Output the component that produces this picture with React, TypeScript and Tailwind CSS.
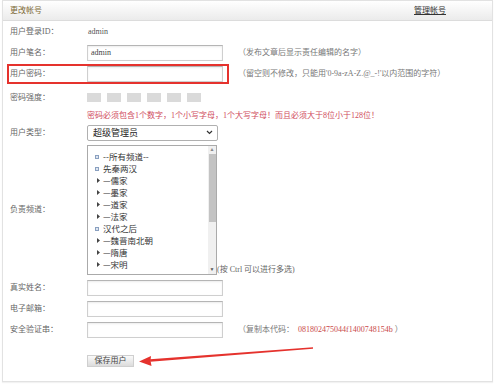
const serif = "font-['Liberation_Serif','Noto_Sans_CJK_SC',serif]";

function Label({ children }: { children: React.ReactNode }) {
  return <div className="w-[84px] shrink-0 pl-[7px] text-[8px] text-[#666]">{children}</div>;
}

function TextInput({ value = "" }: { value?: string }) {
  return (
    <div className="w-[136px] h-[16px] shrink-0 border border-[#cfcfcf] border-t-[#b5b5b5] bg-white shadow-[inset_0_1px_2px_rgba(0,0,0,0.08)] pl-[3px] flex items-center text-[8px] text-[#444]">
      {value}
    </div>
  );
}

const channels: { name: string; group?: boolean }[] = [
  { name: "--所有频道--", group: true },
  { name: "先秦两汉", group: true },
  { name: "—儒家" },
  { name: "—墨家" },
  { name: "—道家" },
  { name: "—法家" },
  { name: "汉代之后", group: true },
  { name: "—魏晋南北朝" },
  { name: "—隋唐" },
  { name: "—宋明" },
];

export default function App() {
  return (
    <div className={`relative w-[499px] h-[386px] bg-white ${serif}`}>
      <div className="ml-[2px] w-[491px] h-[382px] border border-[#e2e2e2] shadow-[0_1px_1px_rgba(0,0,0,0.05)]">
        {/* header */}
        <div className="h-[20px] flex items-center justify-between bg-gradient-to-b from-white to-[#ebebeb] border-b border-[#dcdcdc] pl-[7px] pr-[46px]">
          <span className="text-[8px] text-[#7d6a36]">更改帐号</span>
          <span className="text-[8px] text-[#333] underline">管理帐号</span>
        </div>

        <div className="h-[22px] flex items-center">
          <Label>用户登录ID：</Label>
          <span className="text-[8px] text-[#555] pl-[1px]">admin</span>
        </div>

        <div className="h-[20px] flex items-center">
          <Label>用户笔名：</Label>
          <TextInput value="admin" />
          <span className="ml-[15px] text-[8px] text-[#777]">（发布文章后显示责任编辑的名字）</span>
        </div>

        <div className="relative h-[22px] flex items-center">
          <Label>用户密码：</Label>
          <TextInput />
          <span className="ml-[15px] text-[8px] text-[#777]">（留空则不修改，只能用'0-9a-zA-Z.@_-!'以内范围的字符）</span>
          <div className="absolute left-[4px] top-[1px] w-[222px] h-[20px] border-2 border-[#e5322d]" />
        </div>

        <div className="h-[25px] flex items-center">
          <Label>密码强度：</Label>
          <div className="flex gap-[6px]">
            {[0, 1, 2, 3, 4, 5].map((i) => (
              <div key={i} className="w-[14px] h-[9px] bg-[#dadada]" />
            ))}
          </div>
        </div>

        <div className="h-[12px] flex items-center">
          <Label>{""}</Label>
          <span className="text-[8px] text-[#cf4a5c]">密码必须包含1个数字，1个小写字母，1个大写字母！而且必须大于8位小于128位！</span>
        </div>

        <div className="h-[21px] flex items-center">
          <Label>用户类型：</Label>
          <div className="w-[131px] h-[16px] border border-[#b0b0b0] rounded-[2px] bg-white flex items-center justify-between pl-[5px] pr-[4px] font-['Noto_Sans_CJK_SC',sans-serif] text-[9px] text-[#222]">
            <span>超级管理员</span>
            <svg width="7" height="5" viewBox="0 0 7 5">
              <path d="M1 1l2.5 2.5L6 1" fill="none" stroke="#333" strokeWidth="1.2" />
            </svg>
          </div>
        </div>

        <div className="h-[133px] flex items-center">
          <Label>负责频道：</Label>
          <div className="w-[130px] h-[130px] border border-[#aaa] bg-white flex overflow-hidden">
            <div className="flex-1 pt-[5px] pl-[3px] font-['Noto_Sans_CJK_SC',sans-serif] text-[8.5px] text-[#333]">
              {channels.map((c) => (
                <div key={c.name} className="h-[12px] flex items-center">
                  <span className="w-[11px] flex justify-center">
                    {c.group ? (
                      <span className="w-[4px] h-[4px] border border-[#8aa0c0] bg-[#dfe6f0]" />
                    ) : (
                      <svg className="ml-[4px]" width="3" height="5" viewBox="0 0 3 5">
                        <path d="M0 0L3 2.5L0 5Z" fill="#444" />
                      </svg>
                    )}
                  </span>
                  <span className="ml-[1px]">{c.name}</span>
                </div>
              ))}
            </div>
            <div className="w-[8px] bg-[#f0f0f0] flex flex-col items-center">
              <span className="h-[8px] text-[5px] leading-[8px] text-[#888]">▲</span>
              <div className="w-[7px] h-[68px] bg-[#c3c3c3]" />
              <div className="flex-1" />
              <span className="h-[8px] text-[5px] leading-[8px] text-[#555]">▼</span>
            </div>
          </div>
          <span className="self-end text-[8px] text-[#666]">(按 Ctrl 可以进行多选)</span>
        </div>

        <div className="mt-[1px] h-[21px] flex items-center">
          <Label>真实姓名：</Label>
          <TextInput />
        </div>
        <div className="h-[21px] flex items-center">
          <Label>电子邮箱：</Label>
          <TextInput />
        </div>
        <div className="h-[21px] flex items-center">
          <Label>安全验证串：</Label>
          <TextInput />
          <span className="ml-[15px] text-[8px] text-[#777]">
            （复制本代码：<span className="ml-[4px] text-[#c94a4a]">081802475044f1400748154b</span> ）
          </span>
        </div>

        <div className="mt-[15px] flex">
          <div className="w-[84px]" />
          <div className="w-[47px] h-[12px] border border-[#cfcfcf] bg-gradient-to-b from-[#fafafa] to-[#dcdcdc] flex items-center justify-center text-[8px] text-[#444]">
            保存用户
          </div>
        </div>
      </div>

      {/* annotation arrow */}
      <svg className="absolute left-0 top-0 pointer-events-none" width="499" height="386">
        <path d="M313 347.2 L150 359.2 L150.3 361.8 L313 348.8 Z" fill="#e5322d" />
        <path d="M139 361.5 L151 356 L150.5 360.5 L151.5 366 Z" fill="#e5322d" />
      </svg>
    </div>
  );
}
